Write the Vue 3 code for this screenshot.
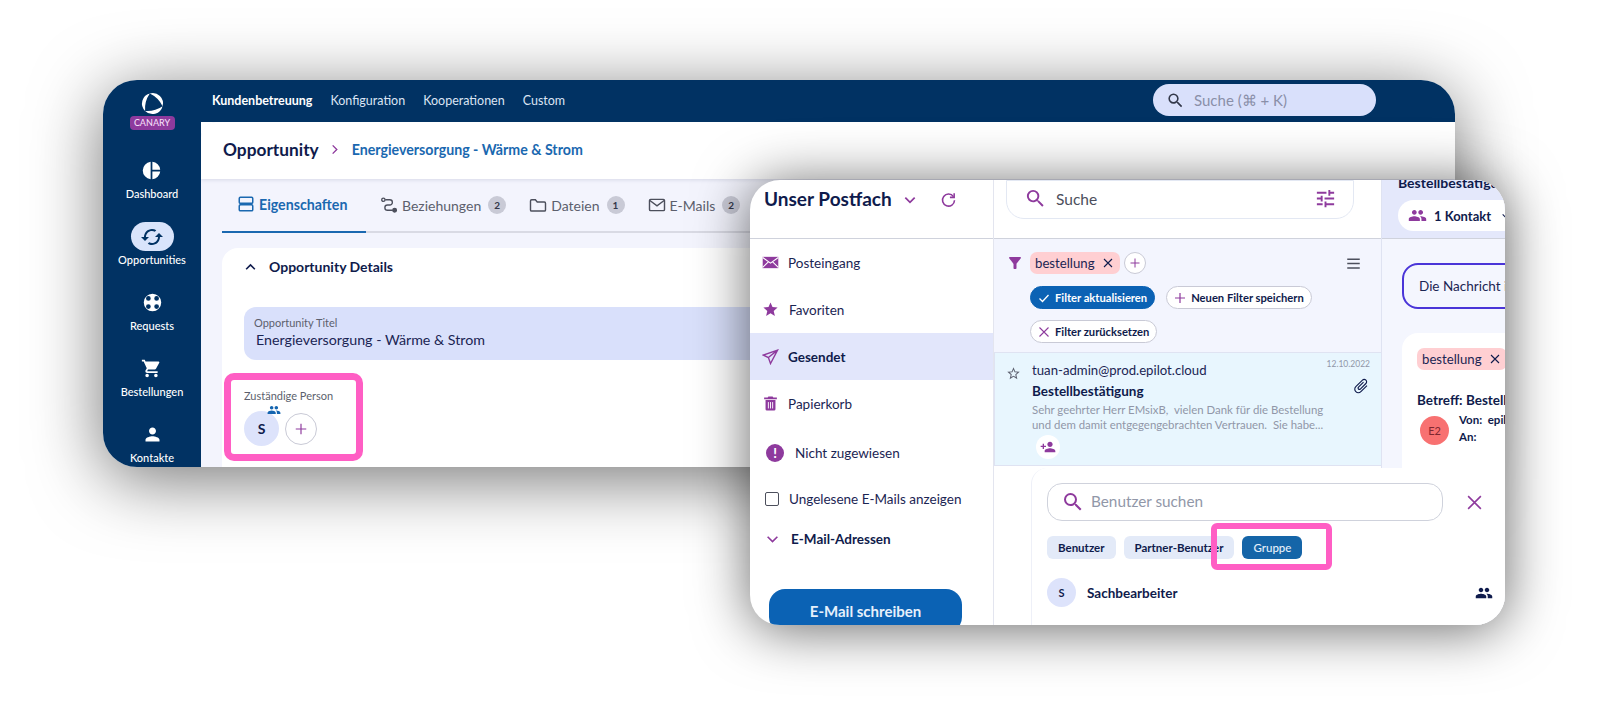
<script setup>
const icons = {
  search: 'M15.5 14h-.79l-.28-.27A6.471 6.471 0 0 0 16 9.5 6.5 6.5 0 1 0 9.5 16c1.61 0 3.09-.59 4.23-1.57l.27.28v.79l5 4.99L20.49 19l-4.99-5zm-6 0C7.01 14 5 11.99 5 9.5S7.01 5 9.5 5 14 7.01 14 9.5 11.99 14 9.5 14z',
  tune: 'M3 17v2h6v-2H3zM3 5v2h10V5H3zm10 16v-2h8v-2h-8v-2h-2v6h2zM7 9v2H3v2h4v2h2V9H7zm14 4v-2H11v2h10zm-6-4h2V7h4V5h-4V3h-2v6z',
  people: 'M16 11c1.66 0 2.99-1.34 2.99-3S17.66 5 16 5c-1.66 0-3 1.34-3 3s1.34 3 3 3zm-8 0c1.66 0 2.99-1.34 2.99-3S9.66 5 8 5C6.34 5 5 6.34 5 8s1.34 3 3 3zm0 2c-2.33 0-7 1.17-7 3.5V19h14v-2.5c0-2.33-4.67-3.5-7-3.5zm8 0c-.29 0-.62.02-.97.05 1.16.84 1.97 1.97 1.97 3.45V19h6v-2.5c0-2.33-4.67-3.5-7-3.5z',
  person: 'M12 12c2.21 0 4-1.79 4-4s-1.79-4-4-4-4 1.79-4 4 1.79 4 4 4zm0 2c-2.67 0-8 1.34-8 4v2h16v-2c0-2.66-5.33-4-8-4z',
  cart: 'M7 18c-1.1 0-1.99.9-1.99 2S5.9 22 7 22s2-.9 2-2-.9-2-2-2zM1 2v2h2l3.6 7.59-1.35 2.45c-.16.28-.25.61-.25.96 0 1.1.9 2 2 2h12v-2H7.42c-.14 0-.25-.11-.25-.25l.03-.12.9-1.63h7.45c.75 0 1.41-.41 1.75-1.03l3.58-6.49c.08-.14.12-.31.12-.48 0-.55-.45-1-1-1H5.21l-.94-2H1zm16 16c-1.1 0-1.99.9-1.99 2s.89 2 1.99 2 2-.9 2-2-.9-2-2-2z',
  cached: 'M19 8l-4 4h3c0 3.31-2.69 6-6 6-1.01 0-1.97-.25-2.8-.7l-1.46 1.46C8.97 19.54 10.43 20 12 20c4.42 0 8-3.58 8-8h3l-4-4zM6 12c0-3.31 2.69-6 6-6 1.01 0 1.97.25 2.8.7l1.46-1.46C15.03 4.46 13.57 4 12 4c-4.42 0-8 3.58-8 8H1l4 4 4-4H6z',
  personAdd: 'M15 12c2.21 0 4-1.79 4-4s-1.79-4-4-4-4 1.79-4 4 1.79 4 4 4zm-9-2V7H4v3H1v2h3v3h2v-3h3v-2H6zm9 4c-2.67 0-8 1.34-8 4v2h16v-2c0-2.66-5.33-4-8-4z',
  star: 'M12 17.27L18.18 21l-1.64-7.03L22 9.24l-7.19-.61L12 2 9.19 8.63 2 9.24l5.46 4.73L5.82 21z',
  starBorder: 'M22 9.24l-7.19-.62L12 2 9.19 8.63 2 9.24l5.46 4.73L5.82 21 12 17.27 18.18 21l-1.63-7.03L22 9.24zM12 15.4l-3.76 2.27 1-4.28-3.32-2.88 4.38-.38L12 6.1l1.71 4.04 4.38.38-3.32 2.88 1 4.28L12 15.4z',
  funnel: 'M4.25 5.61C6.27 8.2 10 13 10 13v6c0 .55.45 1 1 1h2c.55 0 1-.45 1-1v-6s3.72-4.8 5.74-7.39c.51-.66.04-1.61-.79-1.61H5.04c-.83 0-1.3.95-.79 1.61z',
  attach: 'M16.5 6v11.5c0 2.21-1.79 4-4 4s-4-1.79-4-4V5c0-1.38 1.12-2.5 2.5-2.5s2.5 1.12 2.5 2.5v10.5c0 .55-.45 1-1 1s-1-.45-1-1V6H10v9.5c0 1.38 1.12 2.5 2.5 2.5s2.5-1.12 2.5-2.5V5c0-2.21-1.79-4-4-4S7 2.79 7 5v12.5c0 3.04 2.46 5.5 5.5 5.5s5.5-2.46 5.5-5.5V6h-1.5z',
  pie: 'M11 2.05A10 10 0 0 0 11 21.95V2.05zM13 2.05V11h8.95A10 10 0 0 0 13 2.05zM13 13v8.95A10 10 0 0 0 21.95 13H13z',
  lifebuoy: 'M12 2a10 10 0 1 0 0 20 10 10 0 0 0 0-20zM7.3 4.600a2.700 2.700 0 1 1 0 5.400 2.700 2.700 0 0 1 0-5.400zm9.400 0a2.700 2.700 0 1 1 0 5.400 2.700 2.700 0 0 1 0-5.400zM7.300 14a2.700 2.700 0 1 1 0 5.400 2.700 2.700 0 0 1 0-5.400zm9.400 0a2.700 2.700 0 1 1 0 5.400 2.700 2.700 0 0 1 0-5.400z'
}

const sideItems = [
  { label: 'Dashboard', icon: icons.pie },
  { label: 'Opportunities', icon: icons.cached, active: true },
  { label: 'Requests', icon: icons.lifebuoy, evenodd: true },
  { label: 'Bestellungen', icon: icons.cart },
  { label: 'Kontakte', icon: icons.person }
]

const topNav = ['Kundenbetreuung', 'Konfiguration', 'Kooperationen', 'Custom']

const tabs = [
  { label: 'Beziehungen', count: 2, kind: 'rel' },
  { label: 'Dateien', count: 1, kind: 'folder' },
  { label: 'E-Mails', count: 2, kind: 'mail' }
]

const logoTurns = [0, 120, 240]
</script>

<template>
  <main class="page">
    <section class="window back">
      <aside class="sidebar">
        <svg class="logo" viewBox="0 0 24 24">
          <path
            v-for="turn in logoTurns"
            :key="turn"
            fill="#fff"
            :transform="`rotate(${turn} 12 12)`"
            d="M9.4 2.300A10 10 0 0 1 21.700 14.600A25.700 25.700 0 0 0 9.400 2.300z"
          />
        </svg>
        <span class="canary">CANARY</span>
        <div v-for="item in sideItems" :key="item.label" class="side-item">
          <span class="side-icon" :class="{ active: item.active }">
            <svg viewBox="0 0 24 24"><path :d="item.icon" :fill-rule="item.evenodd ? 'evenodd' : 'nonzero'" /></svg>
          </span>
          <span class="side-label">{{ item.label }}</span>
        </div>
      </aside>

      <div class="main">
        <header class="topbar">
          <nav class="top-nav">
            <a v-for="(link, i) in topNav" :key="link" :class="{ current: i === 0 }">{{ link }}</a>
          </nav>
          <div class="global-search">
            <svg viewBox="0 0 24 24"><path :d="icons.search" /></svg>
            <span>Suche (⌘ + K)</span>
          </div>
        </header>

        <div class="content">
          <div class="crumbs">
            <h1>Opportunity</h1>
            <svg viewBox="0 0 24 24" fill="none" stroke="#8e3a9d" stroke-width="3"><path d="M8 3l9 9-9 9" /></svg>
            <span>Energieversorgung - Wärme &amp; Strom</span>
          </div>

          <div class="tabs">
            <div class="tab selected">
              <svg viewBox="0 0 24 24" fill="none" stroke="#1a68b0" stroke-width="2">
                <rect x="3" y="3" width="18" height="8" rx="1.5" />
                <rect x="3" y="13" width="18" height="8" rx="1.5" />
              </svg>
              <span>Eigenschaften</span>
            </div>
            <div v-for="tab in tabs" :key="tab.label" class="tab">
              <svg v-if="tab.kind === 'rel'" viewBox="0 0 24 24" fill="none" stroke="#4c4f5c" stroke-width="1.8">
                <circle cx="4.5" cy="5" r="2.2" />
                <circle cx="19.5" cy="19" r="2.4" fill="#4c4f5c" />
                <path d="M7 5h6a3.5 3.5 0 0 1 0 7h-3a3.5 3.5 0 0 0 0 7h7" />
              </svg>
              <svg v-else-if="tab.kind === 'folder'" viewBox="0 0 24 24" fill="none" stroke="#4c4f5c" stroke-width="1.9">
                <path d="M2 6.500A1.500 1.500 0 0 1 3.500 5h5l2.500 3h9.500A1.500 1.500 0 0 1 22 9.500v9a1.500 1.500 0 0 1-1.500 1.500h-17A1.500 1.500 0 0 1 2 18.500z" />
              </svg>
              <svg v-else viewBox="0 0 24 24" fill="none" stroke="#4c4f5c" stroke-width="1.9">
                <rect x="2" y="4.5" width="20" height="15" rx="1.5" />
                <path d="M2.500 6l9.500 7 9.500-7" />
              </svg>
              <span>{{ tab.label }}</span>
              <b class="count">{{ tab.count }}</b>
            </div>
          </div>

          <div class="card">
            <div class="card-head">
              <svg viewBox="0 0 24 24" fill="none" stroke="#0f1b4c" stroke-width="3"><path d="M4 17l8-8 8 8" /></svg>
              <span>Opportunity Details</span>
            </div>
            <div class="title-field">
              <label>Opportunity Titel</label>
              <div>Energieversorgung - Wärme &amp; Strom</div>
            </div>
            <div class="assignee">
              <label>Zuständige Person</label>
              <div class="assignee-row">
                <span class="avatar big">
                  S
                  <svg class="group-badge" viewBox="0 0 24 24"><path :d="icons.people" /></svg>
                </span>
                <span class="round-add">
                  <svg viewBox="0 0 24 24" fill="none" stroke="#8e3a9d" stroke-width="2"><path d="M12 3v18M3 12h18" /></svg>
                </span>
              </div>
            </div>
          </div>
        </div>
      </div>
      <div class="mark mark-person"></div>
    </section>

    <section class="window front">
      <div class="col col-left">
        <header class="col-head inbox-head">
          <h2>Unser Postfach</h2>
          <svg class="head-chev" viewBox="0 0 24 24" fill="none" stroke="#8e3a9d" stroke-width="3"><path d="M4 8l8 8 8-8" /></svg>
          <svg class="head-refresh" viewBox="0 0 24 24" fill="none" stroke="#8e3a9d" stroke-width="2.2">
            <path d="M19 8a8.500 8.500 0 1 0 1.500 5" />
            <path d="M20 3v6h-6" />
          </svg>
        </header>
        <ul class="folders">
          <li>
            <svg class="f-icon" viewBox="0 0 24 24">
              <path fill="#8e3a9d" d="M1 4h22v16H1z" />
              <path fill="none" stroke="#fff" stroke-width="1.5" d="M1 5l11 8 11-8M1 19l8-8M23 19l-8-8" />
            </svg>
            <span>Posteingang</span>
          </li>
          <li>
            <svg class="f-icon" viewBox="0 0 24 24"><path fill="#8e3a9d" :d="icons.star" /></svg>
            <span class="shift">Favoriten</span>
          </li>
          <li class="sel">
            <svg class="f-icon" viewBox="0 0 24 24" fill="none" stroke="#8e3a9d" stroke-width="1.9">
              <path d="M22 3L2 10l7 3.500L12 22zM22 3L9 13.500" />
            </svg>
            <span>Gesendet</span>
          </li>
          <li>
            <svg class="f-icon" viewBox="0 0 24 24">
              <path fill="#8e3a9d" d="M5 7h14v13a2 2 0 0 1-2 2H7a2 2 0 0 1-2-2zM3 3.500h5l1-1.500h6l1 1.500h5V6H3z" />
              <path stroke="#fff" stroke-width="1.3" d="M9 10v9M12 10v9M15 10v9" />
            </svg>
            <span>Papierkorb</span>
          </li>
        </ul>
        <div class="unassigned">
          <span class="alert">!</span>
          <span>Nicht zugewiesen</span>
        </div>
        <div class="unread">
          <span class="box"></span>
          <span>Ungelesene E-Mails anzeigen</span>
        </div>
        <div class="addresses">
          <svg viewBox="0 0 24 24" fill="none" stroke="#8e3a9d" stroke-width="3"><path d="M3 7l9 9 9-9" /></svg>
          <span>E-Mail-Adressen</span>
        </div>
        <button class="compose" type="button">E-Mail schreiben</button>
      </div>

      <div class="col col-mid">
        <header class="col-head search-head">
          <div class="mail-search">
            <svg viewBox="0 0 24 24"><path fill="#8e3a9d" :d="icons.search" /></svg>
            <span>Suche</span>
            <svg class="tune" viewBox="0 0 24 24"><path fill="#8e3a9d" :d="icons.tune" /></svg>
          </div>
        </header>
        <div class="filters">
          <div class="filter-top">
            <svg class="funnel" viewBox="0 0 24 24"><path fill="#8e3a9d" :d="icons.funnel" /></svg>
            <span class="tag">bestellung
              <svg viewBox="0 0 24 24" fill="none" stroke="#0f1b4c" stroke-width="2.2"><path d="M4 4l16 16M20 4L4 20" /></svg>
            </span>
            <span class="round-add small">
              <svg viewBox="0 0 24 24" fill="none" stroke="#8e3a9d" stroke-width="2"><path d="M12 3v18M3 12h18" /></svg>
            </span>
            <svg class="burger" viewBox="0 0 24 24" fill="none" stroke="#4c4f5c" stroke-width="2.4"><path d="M2 5h20M2 12h20M2 19h20" /></svg>
          </div>
          <div class="filter-actions">
            <span class="pill solid">
              <svg viewBox="0 0 24 24" fill="none" stroke="#fff" stroke-width="2.6"><path d="M3 13l6 6L21 6" /></svg>
              Filter aktualisieren
            </span>
            <span class="pill">
              <svg viewBox="0 0 24 24" fill="none" stroke="#8e3a9d" stroke-width="2.4"><path d="M12 2v20M2 12h20" /></svg>
              Neuen Filter speichern
            </span>
            <span class="pill">
              <svg viewBox="0 0 24 24" fill="none" stroke="#8e3a9d" stroke-width="2.2"><path d="M3 3l18 18M21 3L3 21" /></svg>
              Filter zurücksetzen
            </span>
          </div>
        </div>
        <article class="mail-row">
          <svg class="mail-star" viewBox="0 0 24 24"><path fill="#5d6170" :d="icons.starBorder" /></svg>
          <div class="mail-body">
            <div class="mail-from">tuan-admin@prod.epilot.cloud</div>
            <div class="mail-subject">Bestellbestätigung</div>
            <p>Sehr geehrter Herr EMsixB,&nbsp; vielen Dank für die Bestellung<br />und dem damit entgegengebrachten Vertrauen.&nbsp; Sie habe...</p>
            <span class="assign">
              <svg viewBox="0 0 24 24"><path fill="#8e3a9d" :d="icons.personAdd" /></svg>
            </span>
          </div>
          <div class="mail-meta">
            <span>12.10.2022</span>
            <svg viewBox="0 0 24 24"><path fill="#0f1b4c" :d="icons.attach" /></svg>
          </div>
        </article>
      </div>

      <div class="col col-right">
        <header class="col-head detail-head">
          <div class="detail-title">Bestellbestätigung</div>
          <div class="contacts">
            <svg viewBox="0 0 24 24"><path fill="#8e3a9d" :d="icons.people" /></svg>
            <span>1 Kontakt</span>
            <svg class="contacts-chev" viewBox="0 0 24 24" fill="none" stroke="#0f1b4c" stroke-width="2.6"><path d="M4 8l8 8 8-8" /></svg>
          </div>
        </header>
        <div class="detail-body">
          <div class="notice">Die Nachricht ist</div>
          <div class="message">
            <span class="tag">bestellung
              <svg viewBox="0 0 24 24" fill="none" stroke="#0f1b4c" stroke-width="2.2"><path d="M4 4l16 16M20 4L4 20" /></svg>
            </span>
            <div class="subject">Betreff: Bestellbestätigung</div>
            <div class="sender">
              <span class="e2">E2</span>
              <div class="sender-lines">
                <div>Von:&nbsp; <span>epilot</span></div>
                <div>An:</div>
              </div>
            </div>
          </div>
        </div>
      </div>

      <div class="popover">
        <div class="pop-search">
          <div class="user-search">
            <svg viewBox="0 0 24 24"><path fill="#8e3a9d" :d="icons.search" /></svg>
            <span>Benutzer suchen</span>
          </div>
          <svg class="pop-close" viewBox="0 0 24 24" fill="none" stroke="#8e3a9d" stroke-width="2.2"><path d="M3 3l18 18M21 3L3 21" /></svg>
        </div>
        <div class="pop-chips">
          <span>Benutzer</span>
          <span>Partner-Benutzer</span>
          <span class="on">Gruppe</span>
        </div>
        <div class="pop-user">
          <span class="avatar">S</span>
          <strong>Sachbearbeiter</strong>
          <svg viewBox="0 0 24 24"><path fill="#0f1b4c" :d="icons.people" /></svg>
        </div>
      </div>
      <div class="mark mark-group"></div>
    </section>
  </main>
</template>

<style>
html,
body {
  margin: 0;
  padding: 0;
  background: #fff;
}
</style>

<style scoped>
.page {
  position: relative;
  width: 1600px;
  height: 724px;
  overflow: hidden;
  background: #fff;
  font-family: Lato, "Open Sans", sans-serif;
  color: #0f1b4c;
}

.window {
  position: absolute;
  overflow: hidden;
  background: #fff;
}

.back {
  left: 103px;
  top: 80px;
  width: 1352px;
  height: 387px;
  display: flex;
  border-radius: 34px 34px 0 34px;
  box-shadow: 0 12px 70px rgba(0, 0, 0, 0.55);
}

.front {
  left: 750px;
  top: 180px;
  width: 755px;
  height: 445px;
  display: grid;
  grid-template-columns: 244px 387px 124px;
  border-radius: 30px;
  box-shadow: 0 4px 55px rgba(0, 0, 0, 0.6);
}

.mark {
  position: absolute;
  box-sizing: border-box;
  border: 7px solid #ff5ec4;
  border-radius: 10px;
}

.mark-person {
  left: 121px;
  top: 293px;
  width: 139px;
  height: 88px;
}

.mark-group {
  left: 461px;
  top: 343px;
  width: 121px;
  height: 47px;
  border-width: 6px;
  border-radius: 6px;
}

/* sidebar */
.sidebar {
  width: 98px;
  flex: none;
  background: #013263;
  display: flex;
  flex-direction: column;
  align-items: center;
  padding-top: 11px;
  box-sizing: border-box;
  color: #fff;
}

.logo {
  width: 25px;
  height: 25px;
  flex: none;
}

.canary {
  flex: none;
  width: 45px;
  height: 14px;
  line-height: 14px;
  text-align: center;
  border-radius: 4px;
  background: #8e3a9d;
  font-size: 9px;
  font-weight: 500;
  color: #f3dff7;
}

.side-item {
  display: flex;
  flex-direction: column;
  align-items: center;
  height: 66px;
  flex: none;
}

.side-item:first-of-type {
  margin-top: 26px;
}

.side-icon {
  width: 43px;
  height: 29px;
  display: flex;
  align-items: center;
  justify-content: center;
  border-radius: 15px;
}

.side-icon svg {
  width: 21px;
  height: 21px;
  fill: #fff;
}

.side-icon.active {
  background: #d9e4fb;
}

.side-icon.active svg {
  width: 24px;
  height: 24px;
  fill: #013263;
}

.side-label {
  margin-top: 2px;
  font-size: 11px;
  font-weight: 500;
  line-height: 14px;
}

/* top bar */
.main {
  flex: 1;
  min-width: 0;
  display: flex;
  flex-direction: column;
}

.topbar {
  height: 42px;
  flex: none;
  background: #013263;
  display: flex;
  align-items: center;
  justify-content: space-between;
  padding: 0 79px 0 11px;
}

.top-nav {
  display: flex;
  gap: 18px;
  font-size: 12.5px;
  color: #dbe4f3;
  margin-top: -2px;
}

.top-nav .current {
  color: #fff;
  font-weight: 700;
}

.global-search {
  width: 223px;
  height: 32px;
  margin-top: -2px;
  box-sizing: border-box;
  padding-left: 13px;
  border-radius: 16px;
  background: #d9e0fb;
  display: flex;
  align-items: center;
  gap: 9px;
  font-size: 15px;
  color: #8a8fa8;
}

.global-search svg {
  width: 19px;
  height: 19px;
  fill: #33384a;
}

/* content */
.content {
  flex: 1;
  min-height: 0;
  background: #f3f4fd;
  border-radius: 16px 0 0 0;
  overflow: hidden;
}

.crumbs {
  height: 57px;
  box-sizing: border-box;
  background: #fff;
  display: flex;
  align-items: center;
  padding: 0 0 2px 22px;
  box-shadow: 0 1px 4px rgba(15, 27, 76, 0.12);
  position: relative;
}

.crumbs h1 {
  margin: 0;
  font-size: 17.3px;
  font-weight: 700;
  color: #0f1b4c;
}

.crumbs svg {
  width: 11px;
  height: 11px;
  margin: 0 12px 0 10px;
}

.crumbs span {
  font-size: 14.2px;
  font-weight: 700;
  color: #1a68b0;
}

.tabs {
  height: 54px;
  box-sizing: border-box;
  margin-left: 21px;
  display: flex;
  gap: 23px;
  border-bottom: 2px solid #d9dae4;
}

.tab {
  height: 54px;
  flex: none;
  box-sizing: border-box;
  padding-bottom: 2px;
  display: flex;
  align-items: center;
  gap: 4px;
  font-size: 14px;
  color: #5c5f6d;
}

.tab svg {
  width: 18px;
  height: 18px;
}

.tab.selected {
  width: 144px;
  margin-right: -9px;
  padding-left: 15px;
  font-size: 14.2px;
  color: #1a68b0;
  font-weight: 700;
  border-bottom: 2px solid #1a68b0;
}

.count {
  width: 18px;
  height: 18px;
  margin-left: 3px;
  border-radius: 50%;
  background: #c9cad6;
  color: #33384a;
  font-size: 10px;
  text-align: center;
  line-height: 18px;
}

.card {
  margin: 15px 0 0 21px;
  height: 240px;
  background: #fff;
  border-radius: 16px 0 0 0;
  padding: 0 0 0 22px;
}

.card-head {
  height: 37px;
  display: flex;
  align-items: center;
  gap: 12px;
  font-size: 14px;
  font-weight: 700;
}

.card-head svg {
  width: 13px;
  height: 13px;
}

.title-field {
  margin-top: 22px;
  height: 53px;
  box-sizing: border-box;
  padding: 9px 12px;
  border-radius: 12px 0 0 12px;
  background: #d9e0fb;
}

.title-field label {
  display: block;
  margin-left: -2px;
  font-size: 11px;
  line-height: 14px;
  color: #5c5f6d;
}

.title-field div {
  font-size: 14.25px;
  line-height: 20px;
  color: #1b2553;
}

.assignee {
  margin-top: 29px;
}

.assignee label {
  display: block;
  font-size: 11px;
  line-height: 14px;
  color: #5c5f6d;
}

.assignee-row {
  margin-top: 8px;
  display: flex;
  align-items: center;
  gap: 6px;
}

.avatar {
  position: relative;
  width: 29px;
  height: 29px;
  flex: none;
  display: flex;
  align-items: center;
  justify-content: center;
  border-radius: 50%;
  background: #dde3fb;
  font-size: 11px;
  font-weight: 700;
  color: #0f1b4c;
}

.avatar.big {
  width: 35px;
  height: 35px;
  font-size: 14px;
}

.group-badge {
  position: absolute;
  right: -2px;
  top: -8px;
  width: 14px;
  height: 14px;
  fill: #1565b0;
}

.round-add {
  width: 32px;
  height: 32px;
  box-sizing: border-box;
  display: flex;
  align-items: center;
  justify-content: center;
  border-radius: 50%;
  border: 1px solid #c9cad6;
  background: #fff;
}

.round-add svg {
  width: 14px;
  height: 14px;
}

.round-add.small {
  width: 22px;
  height: 22px;
}

.round-add.small svg {
  width: 12px;
  height: 12px;
}

/* front window */
.col {
  min-width: 0;
  display: flex;
  flex-direction: column;
}

.col-head {
  height: 59px;
  flex: none;
  box-sizing: border-box;
  border-bottom: 1px solid #cfd2dc;
}

.inbox-head {
  display: flex;
  align-items: flex-start;
  padding: 7px 0 0 14px;
}

.inbox-head h2 {
  margin: 0;
  font-size: 19px;
  font-weight: 700;
  line-height: 24px;
}

.head-chev {
  width: 14px;
  height: 14px;
  margin: 6px 0 0 11px;
}

.head-refresh {
  width: 17px;
  height: 17px;
  margin: 4px 0 0 23px;
}

.col-left {
  border-right: 1px solid #e3e5ef;
}

.folders {
  list-style: none;
  margin: 0;
  padding: 0;
}

.folders li {
  height: 47px;
  display: flex;
  align-items: center;
  padding-left: 12px;
  gap: 9px;
  font-size: 13.5px;
  color: #1b2553;
}

.f-icon {
  width: 17px;
  height: 17px;
  flex: none;
}

.folders .sel {
  background: #e2e6fb;
  font-weight: 700;
  color: #0f1b4c;
}

.shift {
  margin-left: 1px;
}

.unassigned {
  display: flex;
  align-items: center;
  gap: 11px;
  margin-top: 16px;
  padding-left: 16px;
  height: 20px;
  font-size: 13.5px;
  color: #1b2553;
}

.alert {
  width: 18px;
  height: 18px;
  border-radius: 50%;
  background: #8e3a9d;
  color: #fff;
  font-size: 13px;
  font-weight: 900;
  line-height: 18px;
  text-align: center;
}

.unread {
  display: flex;
  align-items: center;
  gap: 10px;
  margin-top: 26px;
  padding-left: 15px;
  height: 20px;
  font-size: 13.5px;
  color: #1b2553;
}

.box {
  width: 14px;
  height: 14px;
  box-sizing: border-box;
  border: 1.5px solid #4c4f5c;
  border-radius: 2px;
}

.addresses {
  display: flex;
  align-items: center;
  gap: 12px;
  margin-top: 20px;
  padding-left: 16px;
  height: 20px;
  font-size: 13.5px;
  font-weight: 700;
}

.addresses svg {
  width: 13px;
  height: 13px;
}

.compose {
  width: 193px;
  height: 44px;
  flex: none;
  margin: 40px 0 0 19px;
  padding: 0;
  border: none;
  border-radius: 16px;
  background: #0b62b4;
  color: #e6f0fb;
  font-family: inherit;
  font-size: 15px;
  font-weight: 700;
}

.search-head {
  padding-left: 12px;
}

.mail-search {
  width: 348px;
  height: 39px;
  box-sizing: border-box;
  display: flex;
  align-items: center;
  padding: 0 16px 2px 17px;
  border: 1px solid #e3e8f3;
  border-radius: 0 0 18px 18px;
  font-size: 15.5px;
  color: #4c4f5c;
}

.mail-search svg {
  width: 23px;
  height: 23px;
  margin-right: 9px;
}

.mail-search .tune {
  margin: 0 0 0 auto;
}

.filters {
  height: 114px;
  flex: none;
  box-sizing: border-box;
  background: #f3f5fe;
  border-bottom: 1px solid #dfe3f2;
  padding: 13px 20px 0 12px;
}

.filter-top {
  display: flex;
  align-items: center;
  height: 22px;
}

.funnel {
  width: 18px;
  height: 18px;
  margin-right: 6px;
}

.tag {
  height: 22px;
  box-sizing: border-box;
  display: inline-flex;
  align-items: center;
  gap: 7px;
  padding: 0 6px 0 5px;
  border-radius: 7px;
  background: #ffcfd2;
  font-size: 13.2px;
  color: #1b2553;
}

.tag svg {
  width: 12px;
  height: 12px;
}

.filter-top .round-add {
  margin-left: 4px;
}

.burger {
  width: 15px;
  height: 15px;
  margin-left: auto;
}

.filter-actions {
  display: flex;
  flex-wrap: wrap;
  gap: 11px;
  margin: 12px 0 0 24px;
}

.pill {
  height: 23px;
  box-sizing: border-box;
  display: inline-flex;
  align-items: center;
  gap: 5px;
  padding: 0 7px;
  border: 1px solid #c9cad6;
  border-radius: 12px;
  background: #fff;
  font-size: 11.2px;
  font-weight: 700;
}

.pill svg {
  width: 12px;
  height: 12px;
}

.pill.solid {
  border-color: #0b62b4;
  background: #0b62b4;
  color: #fff;
}

.mail-row {
  height: 113px;
  flex: none;
  box-sizing: border-box;
  display: flex;
  background: #e8f6fe;
  border-left: 1px solid #dfe3f2;
  border-bottom: 1px solid #dfe3f2;
  padding: 8px 11px 0 11px;
}

.mail-star {
  width: 15px;
  height: 15px;
  margin: 5px 11px 0 0;
  flex: none;
}

.mail-body {
  width: 296px;
  flex: none;
}

.mail-from {
  font-size: 13.2px;
  line-height: 18px;
  color: #1b2553;
}

.mail-subject {
  margin-top: 3px;
  font-size: 13.5px;
  font-weight: 700;
  line-height: 18px;
}

.mail-body p {
  margin: 2px 0 0;
  height: 29px;
  overflow: hidden;
  white-space: nowrap;
  font-size: 11.4px;
  line-height: 15px;
  color: #9197a8;
}

.assign {
  width: 24px;
  height: 24px;
  margin: 4px 0 0 4px;
  display: flex;
  align-items: center;
  justify-content: center;
  border-radius: 50%;
  background: #fff;
}

.assign svg {
  width: 16px;
  height: 16px;
}

.mail-meta {
  flex: 1;
  min-width: 0;
  display: flex;
  flex-direction: column;
  align-items: flex-end;
  margin-top: -2px;
  font-size: 8.5px;
  white-space: nowrap;
  color: #9197a8;
}

.mail-meta svg {
  width: 18px;
  height: 18px;
  flex: none;
  margin-top: 8px;
  transform: rotate(45deg);
}

.col-right {
  border-left: 1px solid #dfe3f2;
  overflow: hidden;
}

.detail-head {
  background: #e4e8fb;
  overflow: hidden;
  padding-left: 16px;
}

.detail-title {
  margin-top: -6px;
  font-size: 14px;
  line-height: 18px;
  font-weight: 700;
  white-space: nowrap;
}

.contacts {
  width: 150px;
  height: 31px;
  margin-top: 8px;
  box-sizing: border-box;
  display: flex;
  align-items: center;
  padding-left: 10px;
  border-radius: 16px;
  background: #fff;
  font-size: 13px;
  font-weight: 700;
  white-space: nowrap;
}

.contacts svg {
  width: 19px;
  height: 19px;
  margin-right: 7px;
}

.contacts .contacts-chev {
  width: 10px;
  height: 10px;
  margin: 0 0 0 10px;
}

.detail-body {
  flex: 1;
  background: #f4f6fe;
  padding: 24px 0 0 20px;
  overflow: hidden;
}

.notice {
  width: 200px;
  height: 46px;
  box-sizing: border-box;
  padding-left: 15px;
  display: flex;
  align-items: center;
  border: 2px solid #4a35d8;
  border-radius: 16px;
  font-size: 13.5px;
  color: #1b2553;
  white-space: nowrap;
}

.message {
  width: 200px;
  height: 200px;
  margin-top: 24px;
  padding: 15px;
  box-sizing: border-box;
  border-radius: 16px;
  background: #fff;
  white-space: nowrap;
}

.subject {
  margin-top: 22px;
  font-size: 13.5px;
  font-weight: 700;
}

.sender {
  display: flex;
  margin: 8px 0 0 3px;
  gap: 10px;
}

.e2 {
  width: 29px;
  height: 29px;
  flex: none;
  display: flex;
  align-items: center;
  justify-content: center;
  border-radius: 50%;
  background: #f87171;
  color: #7d2730;
  font-size: 11px;
}

.sender-lines {
  font-size: 11.5px;
  font-weight: 700;
  line-height: 17px;
  margin-top: -5px;
}

/* user picker */
.popover {
  position: absolute;
  left: 281px;
  top: 288px;
  right: 0;
  bottom: 0;
  box-sizing: border-box;
  padding: 15px 0 0 15px;
  border-left: 1px solid #eef0f8;
  border-radius: 16px 0 0 0;
  background: #fff;
}

.pop-search {
  display: flex;
  align-items: center;
}

.user-search {
  width: 396px;
  height: 38px;
  box-sizing: border-box;
  display: flex;
  align-items: center;
  gap: 6px;
  padding: 0 0 3px 13px;
  border: 1px solid #cfd2dc;
  border-radius: 15px;
  font-size: 15.3px;
  color: #9197a8;
}

.user-search svg {
  width: 24px;
  height: 24px;
  margin-top: 3px;
}

.pop-close {
  width: 17px;
  height: 17px;
  margin-left: 23px;
}

.pop-chips {
  display: flex;
  gap: 8px;
  margin-top: 15px;
}

.pop-chips span {
  height: 23px;
  line-height: 23px;
  padding: 0 11px;
  border-radius: 6px;
  background: #e3eaf8;
  font-size: 11.5px;
  font-weight: 700;
}

.pop-chips .on {
  background: #1565a8;
  color: #e6f0fb;
  font-weight: 500;
}

.pop-user {
  display: flex;
  align-items: center;
  margin-top: 19px;
  gap: 11px;
  font-size: 13.5px;
}

.pop-user svg {
  width: 18px;
  height: 18px;
  margin: 0 12px 0 auto;
}
</style>
